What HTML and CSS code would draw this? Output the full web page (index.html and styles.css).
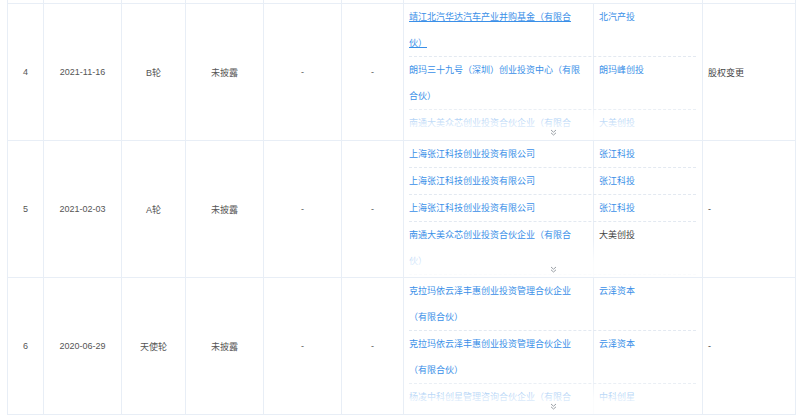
FILE: index.html
```html
<!DOCTYPE html>
<html lang="zh-CN">
<head>
<meta charset="utf-8">
<title>融资历程</title>
<link rel="stylesheet" href="styles.css">
</head>
<body>
<div class="wrap">
<table class="fin">
  <colgroup>
    <col class="c-no"><col class="c-date"><col class="c-round"><col class="c-amt"><col class="c-val"><col class="c-ratio"><col class="c-inv"><col class="c-note">
  </colgroup>
  <tr class="stub"><td></td><td></td><td></td><td></td><td></td><td></td><td></td><td></td></tr>
  <tr>
    <td class="ctr">4</td>
    <td class="ctr">2021-11-16</td>
    <td class="ctr">B轮</td>
    <td class="ctr">未披露</td>
    <td class="ctr">-</td>
    <td class="ctr">-</td>
    <td class="inv">
      <div class="list">
        <div class="item"><a class="name ul">靖江北汽华达汽车产业并购基金（有限合伙）</a><a class="short">北汽产投</a></div>
        <div class="item"><a class="name">朗玛三十九号（深圳）创业投资中心（有限合伙）</a><a class="short">朗玛峰创投</a></div>
        <div class="item"><a class="name">南通大美众芯创业投资合伙企业（有限合伙）</a><a class="short">大美创投</a></div>
        <div class="more"><svg width="7" height="7" viewBox="0 0 7 7"><path d="M1 1L3.5 3.2L6 1M1 3.8L3.5 6L6 3.8" fill="none" stroke="#9aa0a6" stroke-width="1"/></svg></div>
      </div>
    </td>
    <td class="note">股权变更</td>
  </tr>
  <tr>
    <td class="ctr">5</td>
    <td class="ctr">2021-02-03</td>
    <td class="ctr">A轮</td>
    <td class="ctr">未披露</td>
    <td class="ctr">-</td>
    <td class="ctr">-</td>
    <td class="inv">
      <div class="list">
        <div class="item"><a class="name">上海张江科技创业投资有限公司</a><a class="short">张江科投</a></div>
        <div class="item"><a class="name">上海张江科技创业投资有限公司</a><a class="short">张江科投</a></div>
        <div class="item"><a class="name">上海张江科技创业投资有限公司</a><a class="short">张江科投</a></div>
        <div class="item"><a class="name">南通大美众芯创业投资合伙企业（有限合伙）</a><span class="short plain">大美创投</span></div>
        <div class="more"><svg width="7" height="7" viewBox="0 0 7 7"><path d="M1 1L3.5 3.2L6 1M1 3.8L3.5 6L6 3.8" fill="none" stroke="#9aa0a6" stroke-width="1"/></svg></div>
      </div>
    </td>
    <td class="note">-</td>
  </tr>
  <tr>
    <td class="ctr">6</td>
    <td class="ctr">2020-06-29</td>
    <td class="ctr">天使轮</td>
    <td class="ctr">未披露</td>
    <td class="ctr">-</td>
    <td class="ctr">-</td>
    <td class="inv">
      <div class="list">
        <div class="item"><a class="name">克拉玛依云泽丰惠创业投资管理合伙企业（有限合伙）</a><a class="short">云泽资本</a></div>
        <div class="item"><a class="name">克拉玛依云泽丰惠创业投资管理合伙企业（有限合伙）</a><a class="short">云泽资本</a></div>
        <div class="item"><a class="name">杨凌中科创星管理咨询合伙企业（有限合伙）</a><a class="short">中科创星</a></div>
        <div class="more"><svg width="7" height="7" viewBox="0 0 7 7"><path d="M1 1L3.5 3.2L6 1M1 3.8L3.5 6L6 3.8" fill="none" stroke="#9aa0a6" stroke-width="1"/></svg></div>
      </div>
    </td>
    <td class="note">-</td>
  </tr>
</table>
</div>
</body>
</html>
```
FILE: styles.css
```css
html, body {
  margin: 0;
  padding: 0;
  background: #fff;
}
body {
  font-family: "Liberation Sans", "Noto Sans CJK SC", sans-serif;
  font-size: 9px;
  color: #555;
  text-spacing-trim: space-all;
}
.wrap {
  padding: 0 4px 0 7px;
}
.fin {
  border-collapse: collapse;
  table-layout: fixed;
  width: 789px;
}
.fin td {
  border: 1px solid #e8eef6;
  padding: 0;
  vertical-align: middle;
}
.c-no { width: 36px; }
.c-date { width: 78px; }
.c-round { width: 64px; }
.c-amt { width: 78px; }
.c-val { width: 78px; }
.c-ratio { width: 62px; }
.c-inv { width: 299px; }
.c-note { width: 93px; }
.stub td {
  border-top: none;
  height: 3px;
}
.ctr {
  text-align: center;
}
.note {
  padding-left: 5px !important;
  color: #444;
}
.inv {
  vertical-align: top !important;
}
.list {
  position: relative;
  height: 136px;
  overflow: hidden;
  margin: 0 6px 0 5px;
  background: linear-gradient(#e8eef6, #e8eef6) no-repeat 184px 0 / 1px 100%;
}
.item {
  display: grid;
  grid-template-columns: 185px 1fr;
  border-bottom: 1px dashed #e3e9f1;
  line-height: 26px;
}
.name {
  color: #3a8fe8;
  padding-right: 9px;
  font-family: "Noto Sans CJK SC", sans-serif;
  text-spacing-trim: space-all;
}
.name.ul {
  text-decoration: underline;
}
.short {
  color: #3a8fe8;
  padding-left: 5px;
  font-family: "Noto Sans CJK SC", sans-serif;
}
.short.plain {
  color: #444;
}
.list::after {
  content: "";
  position: absolute;
  left: 0;
  right: 0;
  bottom: 0;
  height: 38px;
  background: linear-gradient(rgba(255,255,255,0), rgba(255,255,255,0.8) 60%, rgba(255,255,255,0.85));
}
.more {
  position: absolute;
  left: 50%;
  bottom: 4px;
  width: 7px;
  height: 7px;
  margin-left: -3px;
  z-index: 1;
  line-height: 0;
}
```
